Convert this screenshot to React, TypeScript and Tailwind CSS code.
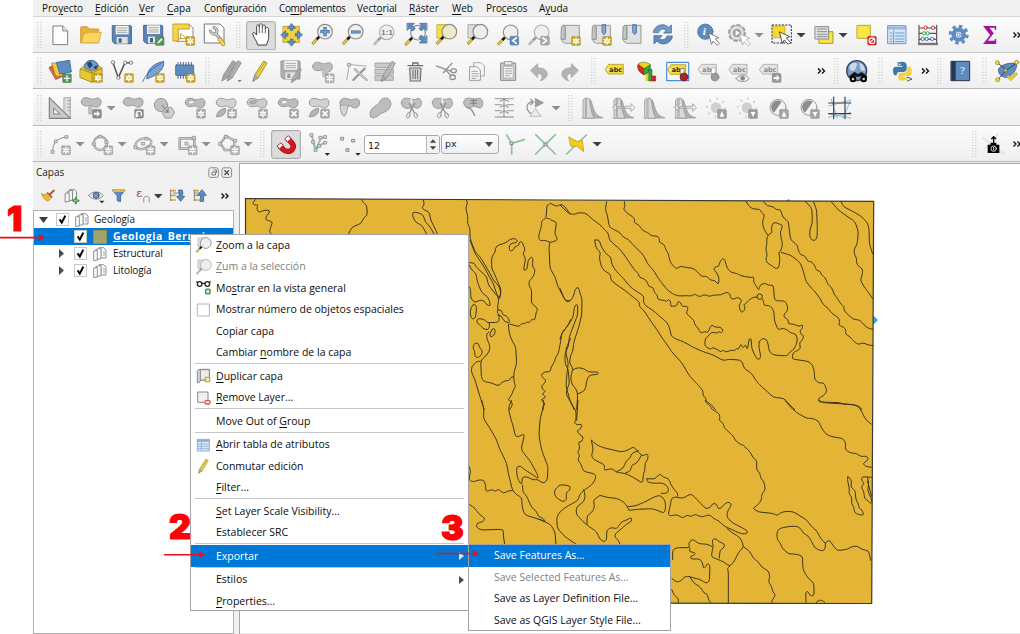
import React from "react";

type P = { children?: React.ReactNode };

/* ---------- basic building blocks ---------- */

// Icons are drawn on a fine grid, three units to a pixel.
function Ic({ x, y, children }: P & { x: number; y: number }) {
  return (
    <svg className="h-[30px] w-[31px] shrink-0" viewBox={`${x} ${y} 93 90`} fill="none" strokeLinejoin="round" strokeLinecap="round">
      {children}
    </svg>
  );
}

function Grip({ className = "w-3" }: { className?: string }) {
  return (
    <div className={`flex h-full shrink-0 items-center justify-center ${className}`}>
      <svg className="h-[26px] w-[5px]" viewBox="0 0 5 26" stroke="#bdbdbd" strokeWidth="1" strokeDasharray="1 1.8">
        <path d="M.8 0V26M3.8 0V26" />
      </svg>
    </div>
  );
}

function Drop({ dark = false }: { dark?: boolean }) {
  return (
    <svg className="h-[30px] w-[11px] shrink-0" viewBox="0 0 11 30">
      <path d="M-.2 13H8.6L4.2 17.6Z" fill={dark ? "#3c3c3c" : "#8e8e8e"} />
    </svg>
  );
}

function More({ className = "w-[14px]" }: { className?: string }) {
  return (
    <svg className={`h-[30px] shrink-0 ${className}`} viewBox="0 0 14 30" fill="none" stroke="#111" strokeWidth="1.4">
      <path d="M3.5 12.5L6 15L3.5 17.5M7.5 12.5L10 15L7.5 17.5" />
    </svg>
  );
}

function Bar({ children, className = "" }: P & { className?: string }) {
  return (
    <div className={`flex shrink-0 items-center overflow-hidden border-b bg-linear-to-b from-[#fbfbfb] to-[#efefef] ${className}`}>{children}</div>
  );
}

function Mn({ t }: { t: string }) {
  const i = t.indexOf("&");
  if (i < 0) return <>{t}</>;
  return (
    <>
      {t.slice(0, i)}
      <span className="underline underline-offset-[1.5px]">{t[i + 1]}</span>
      {t.slice(i + 2)}
    </>
  );
}

/* ---------- icon parts ---------- */

const BLUE = "#5f8cc0";

function Badge({ x, y, k, c = "#a9a9a9" }: { x: number; y: number; k: string; c?: string }) {
  return (
    <g transform={`translate(${x} ${y})`}>
      <rect x="-13.5" y="-13.5" width="27" height="27" rx="4" fill={c} stroke="#00000030" strokeWidth="2" />
      {k === "star" && (
        <>
          <path d="M0-9V9M-8-4.5L8 4.5M-8 4.5L8-4.5" stroke="#fff" strokeWidth="4.5" />
          <circle r="2" fill={c} />
        </>
      )}
      {k === "plus" && <path d="M0-8V8M-8 0H8" stroke="#fff" strokeWidth="4" />}
      {k === "x" && <path d="M-6-6L6 6M-6 6L6-6" stroke="#fff" strokeWidth="5" />}
      {k === "pen" && <path d="M-7 8L-5 2L5-8L9-4L-2 6Z" fill="#fff" />}
      {k === "right" && <path d="M-9-3H0V-9L9 0L0 9V3H-9Z" fill="#fff" />}
      {k === "up" && <path d="M0-9L7 8H-7Z" fill="#fff" />}
      {k === "down" && <path d="M0 9L7-6H-7Z" fill="#fff" />}
      {k === "rot" && <path d="M-4 8A8 8 0 1 1 6 5M-4 8V0M-4 8H-10" stroke="#fff" strokeWidth="3.5" />}
      {k === "lt" && <path d="M6-8L-5 0L6 8" stroke="#fff" strokeWidth="5" />}
      {k === "gt" && <path d="M-6-8L5 0L-6 8" stroke="#fff" strokeWidth="5" />}
    </g>
  );
}

const GOLD = "#c9a61a";

function Glass({ x, y, gray = false, fill = "#eeeeeaee" }: { x: number; y: number; gray?: boolean; fill?: string }) {
  return (
    <g transform={`translate(${x} ${y})`}>
      <path d="M-38 37L-24 22" stroke={gray ? "#a8a8a8" : "#8a7420"} strokeWidth="8" strokeLinecap="butt" />
      <path d="M-37 36L-24 22" stroke={gray ? "#c4c4c4" : "#f7cf2b"} strokeWidth="5" strokeLinecap="butt" />
      <path d="M-25 23L-17 15" stroke={gray ? "#999" : "#111"} strokeWidth="8" strokeLinecap="butt" />
      <circle r="22" fill={fill} stroke={gray ? "#b0b0b0" : "#8d8d8d"} strokeWidth="3.5" />
    </g>
  );
}

function Cursor({ x, y, o = "#444" }: { x: number; y: number; o?: string }) {
  return <path transform={`translate(${x} ${y})`} d="M0 0L30 14L20 18L32 31L26 37L14 24L9 33Z" fill="#fff" stroke={o} strokeWidth="2.5" />;
}

function Floppy({ x, y, gray = false }: { x: number; y: number; gray?: boolean }) {
  return (
    <g transform={`translate(${x} ${y})`}>
      <path d="M0 2H54L56 4V56H6L0 50Z" fill={gray ? "#adadad" : "#5c85b3"} stroke={gray ? "#8d8d8d" : "#44638a"} strokeWidth="3" />
      <path d="M9 2H48V28H9Z" fill="#f4f4f2" />
      <path d="M14 9H43M14 16H43M14 22H43" stroke="#999" strokeWidth="2.5" />
      <path d="M12 36H45V56H12Z" fill="#e2e2e0" />
      <path d="M18 40H27V53H18Z" fill={gray ? "#999" : "#44638a"} />
    </g>
  );
}

function Blob({ x, y, f = "#bdbdbd", hole = false, hf = "#f6f6f6" }: { x: number; y: number; f?: string; hole?: boolean; hf?: string }) {
  return (
    <g transform={`translate(${x} ${y})`}>
      <path d="M1 14C1 4 9 0 18 1C28 3 34 8 42 4C50 0 58 2 60 11C61 21 56 29 47 30C38 31 36 22 27 24C16 28 2 27 1 14Z" fill={f} stroke="#8f8f8f" strokeWidth="2.5" />
      {hole && <path d="M9 14C10 6 22 6 30 10C27 18 12 21 9 14Z" fill={hf} stroke="#8f8f8f" strokeWidth="2" />}
    </g>
  );
}

function Tag({ x, y, c, s, w = 54 }: { x: number; y: number; c: string; s: string; w?: number }) {
  return (
    <g transform={`translate(${x} ${y})`}>
      <path d={`M0 15L10 0H${w}V29H10Z`} fill={c} stroke={s} strokeWidth="2.5" />
      <circle cx="8" cy="15" r="2.5" fill="#fff" />
      <text x="12" y="22" className="font-['DejaVu_Sans'] text-[20px] font-bold" fill={s === "#a8a8a8" ? "#8a8a8a" : "#2b2b2b"} textLength={w - 16} lengthAdjust="spacingAndGlyphs">
        abc
      </text>
    </g>
  );
}

function Node({ x, y, c = "#8f8f8f" }: { x: number; y: number; c?: string }) {
  return <rect x={x - 4} y={y - 4} width="8" height="8" fill="#ddd" stroke={c} strokeWidth="2.5" />;
}

function Pencil({ x, y, c = "#f0d34a", o = "#9a8320" }: { x: number; y: number; c?: string; o?: string }) {
  return (
    <g transform={`translate(${x} ${y})`}>
      <path d="M2 62L7 44L34 2L44 8L18 52Z" fill={c} stroke={o} strokeWidth="2.5" />
      <path d="M12 46L38 6" stroke={o} strokeWidth="1.5" />
      <path d="M2 62L7 45L17 52Z" fill="#a9a9a9" stroke="#888" strokeWidth="1.5" />
    </g>
  );
}

function Scissor({ x }: { x: number }) {
  return (
    <g transform={`translate(${x} 0)`} stroke="#909090" strokeWidth="2.5">
      <path d="M2 50C2 38 14 34 24 38C34 34 38 44 44 40C56 32 64 42 62 54C60 68 46 70 38 62L30 66C16 70 4 66 2 50Z" fill="#bfbfbf" />
      <path d="M32 34V50" stroke="#f4f4f4" strokeWidth="5" />
      <path d="M26 52L42 82M42 52L26 82" strokeWidth="4" />
      <ellipse cx="23" cy="88" rx="5" ry="8" fill="#eee" transform="rotate(20 23 88)" />
      <ellipse cx="45" cy="88" rx="5" ry="8" fill="#eee" transform="rotate(-20 45 88)" />
    </g>
  );
}

function Hist({ x, arrows = false }: { x: number; arrows?: boolean }) {
  return (
    <g transform={`translate(${x} 0)`}>
      <path d="M27 42C35 58 34 90 64 95H27Z" fill="#b0b0b0" stroke="#999" strokeWidth="2.5" />
      <path d="M4 96V42L11 36V96ZM14 96V36L23 38C27 60 27 76 37 96Z" fill="#d9d9d9" stroke="#9b9b9b" strokeWidth="2.5" />
      <path d="M0 96H62" stroke="#aaa" strokeWidth="2" />
      {arrows && <path d="M0 64L11 53V61H24V53M66 64L55 53V61H36V67H55V75ZM0 64L11 75V67H24" fill="#f4f4f4" stroke="#9b9b9b" strokeWidth="2.5" />}
    </g>
  );
}

function Book({ x, y, mark = false }: { x: number; y: number; mark?: boolean }) {
  return (
    <g transform={`translate(${x} ${y})`}>
      <path d="M2 8C2 0 14 0 14 8V44H2Z" fill="#c4c4c4" stroke="#858585" strokeWidth="2.5" />
      <path d="M10 2H56V56H14L4 50V44H14V8Z" fill="#e0e0e0" stroke="#8a8a8a" strokeWidth="2.5" />
      {mark && <path d="M32 0H42V24L37 30L32 24Z" fill="#7fa6d2" stroke="#3f6694" strokeWidth="2.5" />}
    </g>
  );
}

/* ---------- toolbars ---------- */

function FileBar() {
  return (
    <Bar className="h-[37px] border-t border-t-[#d6d6d6] border-b-[#c6c6c6] pt-px">
      <Grip />
      <Ic x={45} y={60}>
        <path d="M70 78H98L113 93V134H70Z" fill="#fdfdfd" stroke="#7d7d7d" strokeWidth="3" />
        <path d="M98 78V93H113" fill="#ddd" stroke="#7d7d7d" strokeWidth="2.5" />
      </Ic>
      <Ic x={138} y={60}>
        <path d="M152 126V84Q152 80 156 80H172L178 87H206V128H152Z" fill="#e8b13a" stroke="#c8932a" strokeWidth="2.5" />
        <path d="M154 128L161 102L178 97H214L206 128Z" fill="#fbd560" stroke="#d7a83a" strokeWidth="2.5" />
      </Ic>
      <Ic x={231} y={60}>
        <Floppy x={248} y={75} />
      </Ic>
      <Ic x={324} y={60}>
        <Floppy x={342} y={74} />
        <Badge x={389} y={123} k="pen" c="#53945d" />
      </Ic>
      <Ic x={417} y={60}>
        <path d="M442 74H479L489 84V124H442Z" fill="#fff" stroke="#777" strokeWidth="2.5" />
        <path d="M430 72H478V87H445V123H430Z" fill="#f5d54a" stroke="#b3912a" strokeWidth="2.5" />
        <path d="M452 100V116M448 116H470M456 104L466 112" stroke="#b99b35" strokeWidth="3" />
        <Badge x={481} y={123} k="star" c={GOLD} />
      </Ic>
      <Ic x={510} y={60}>
        <path d="M524 72H570L582 84V129H524Z" fill="#fdfdfd" stroke="#777" strokeWidth="3" />
        <path d="M541 93C546 104 556 104 560 98C562 92 560 86 552 82M556 100L573 120" stroke="#7d7d7d" strokeWidth="9" />
        <path d="M541 93C546 104 556 104 560 98C562 92 560 86 552 82M556 100L573 120" stroke="#cfcfcf" strokeWidth="5" />
        <path d="M569 118L580 132" stroke="#a5842a" strokeWidth="12" />
        <path d="M569 118L580 132" stroke="#f5d75c" strokeWidth="8" />
      </Ic>
      <Grip className="w-[15px]" />
      <Ic x={648} y={60}>
        <rect x="650" y="65" width="86" height="84" rx="5" fill="#dcdcdc" stroke="#a8a8a8" strokeWidth="3" />
        <path
          d="M683 134C681 122 668 110 668 101C669 96 675 97 680 105V80C680 73 687 73 688 80V76C688 70 696 70 697 76V79C698 73 706 74 706 80V86C708 80 716 82 716 88V112C716 122 711 126 710 134Z"
          fill="#fff"
          stroke="#333"
          strokeWidth="2.8"
        />
        <path d="M688 80V98M697 79V98M706 86V99" stroke="#333" strokeWidth="2.3" />
      </Ic>
      <Ic x={741} y={60}>
        <rect x="760" y="79" width="48" height="48" fill="#f3d23b" stroke="#b1932a" strokeWidth="2.5" />
        <path
          d="M785 71L797 85H789V91H781V85H773ZM785 138L797 124H789V117H781V124H773ZM753 104L767 92V100H774V108H767V116ZM817 104L803 92V100H796V108H803V116Z"
          fill={BLUE}
          stroke="#3d618f"
          strokeWidth="2"
        />
      </Ic>
      <Ic x={834} y={60}>
        <Glass x={885} y={95} />
        <path d="M885 81V109M871 95H899" stroke="#416a9c" strokeWidth="10" strokeLinecap="butt" />
        <path d="M885 83V107M873 95H897" stroke="#6d9bd0" strokeWidth="6" strokeLinecap="butt" />
      </Ic>
      <Ic x={927} y={60}>
        <Glass x={977} y={95} />
        <path d="M963 96H992" stroke="#416a9c" strokeWidth="9" strokeLinecap="butt" />
        <path d="M965 96H990" stroke="#6d9bd0" strokeWidth="5" strokeLinecap="butt" />
      </Ic>
      <Ic x={30} y={60}>
        <Glass x={80} y={97} gray />
        <text x="64" y="105" className="font-['Liberation_Sans'] text-[23px] font-bold" fill="#777" textLength="34">
          1:1
        </text>
      </Ic>
      <Ic x={123} y={60}>
        <Glass x={174} y={98} fill="#f4f4f4" />
        <path
          d="M142 70H163L157 77L166 86L158 93L149 84L142 91ZM200 70H179L185 77L177 86L184 93L193 84L200 91ZM200 129H178L185 121L176 113L184 105L193 114L200 107Z"
          fill={BLUE}
          stroke="#3d618f"
          strokeWidth="2"
        />
      </Ic>
      <Ic x={216} y={60}>
        <rect x="232" y="74" width="36" height="40" fill="#f8e23c" stroke="#b9a32f" strokeWidth="2.5" />
        <Glass x={268} y={95} fill="#efe9c9ee" />
      </Ic>
      <Ic x={309} y={60}>
        <rect x="325" y="74" width="36" height="40" fill="#dcdcdc" stroke="#999" strokeWidth="2.5" />
        <Glass x={361} y={95} />
      </Ic>
      <Ic x={402} y={60}>
        <Glass x={452} y={97} />
        <Badge x={463} y={122} k="lt" c={BLUE} />
      </Ic>
      <Ic x={495} y={60}>
        <Glass x={545} y={97} gray />
        <Badge x={555} y={122} k="gt" />
      </Ic>
      <Ic x={588} y={60}>
        <Book x={602} y={74} />
        <Badge x={648} y={123} k="star" c={GOLD} />
      </Ic>
      <Ic x={681} y={60}>
        <Book x={695} y={74} mark />
        <Badge x={741} y={123} k="star" c={GOLD} />
      </Ic>
      <Ic x={774} y={60}>
        <Book x={787} y={74} mark />
      </Ic>
      <Ic x={867} y={60}>
        <path d="M880 97C882 76 912 66 926 83L934 75V99H911L919 91C908 83 899 88 896 97Z" fill="#6f9bcd" stroke="#41699b" strokeWidth="2.5" />
        <path d="M937 109C935 131 905 140 891 123L882 132V107H906L898 115C907 124 918 118 921 109Z" fill={BLUE} stroke="#41699b" strokeWidth="2.5" />
      </Ic>
      <Grip className="w-[13px]" />
      <Ic x={9} y={60}>
        <circle cx="46" cy="95" r="23" fill={BLUE} stroke="#48719f" strokeWidth="2.5" />
        <text x="38" y="106" className="font-['Liberation_Serif'] text-[34px] font-bold italic" fill="#fff">
          i
        </text>
        <Cursor x={56} y={99} o="#666" />
      </Ic>
      <Ic x={102} y={60}>
        <circle cx="141" cy="99" r="24" stroke="#a2a2a2" strokeWidth="6" strokeDasharray="9 9.85" />
        <circle cx="141" cy="99" r="22" fill="#e2e2e2" stroke="#9c9c9c" strokeWidth="2.5" />
        <circle cx="141" cy="99" r="13" fill="#a2a2a2" />
        <path d="M137 91L150 99L137 107Z" fill="#fff" />
        <Cursor x={149} y={101} o="#aaa" />
      </Ic>
      <Drop />
      <Ic x={228} y={60}>
        <rect x="246" y="75" width="58" height="54" fill="#f2f2f2" stroke="#222" strokeWidth="3" strokeDasharray="6 4" strokeLinecap="butt" />
        <path d="M249 78H285V113H249Z" fill="#f5d92f" stroke="#b9a32f" strokeWidth="2" />
        <Cursor x={269} y={96} o="#333" />
      </Ic>
      <Drop dark />
      <Ic x={354} y={60}>
        <rect x="388" y="95" width="41" height="35" fill="#fbe544" stroke="#a8942c" strokeWidth="3" />
        <path d="M376 80H416V117H376Z" fill="#e3e3e3" stroke="#888" strokeWidth="3" />
        <path d="M382 87H411M382 95H411M382 103H411M382 110H411" stroke="#8d8d8d" strokeWidth="3" />
      </Ic>
      <Drop dark />
      <Ic x={480} y={60}>
        <rect x="502" y="76" width="39" height="39" fill="#fbe544" stroke="#b9a32f" strokeWidth="3" />
        <Badge x={546} y={122} k="" c="#d8272c" />
        <circle cx="546" cy="122" r="8.5" stroke="#fff" strokeWidth="3.5" />
        <path d="M540 128L552 116" stroke="#fff" strokeWidth="3.5" />
      </Ic>
      <Ic x={573} y={60}>
        <rect x="594" y="77" width="54" height="54" fill="#d7e6f5" stroke="#6d9bd0" strokeWidth="3" />
        <path d="M594 84H648" stroke="#6d9bd0" strokeWidth="9" strokeLinecap="butt" opacity=".6" />
        <path d="M611 92V131M600 99H606M600 108H606M600 117H606M600 125H606M617 99H642M617 108H642M617 117H642M617 125H642" stroke="#6d9bd0" strokeWidth="3" />
      </Ic>
      <Ic x={666} y={60}>
        <path d="M687 76V133M740 76V133M687 84H740M687 100H740M687 118H740" stroke="#555" strokeWidth="3.5" />
        <path d="M684 132H744" stroke="#777" strokeWidth="7" strokeLinecap="butt" />
        <g fill="#fff" strokeWidth="3">
          <circle cx="707" cy="83" r="5" stroke="#d03030" />
          <circle cx="729" cy="83" r="5" stroke="#d03030" />
          <circle cx="702" cy="100" r="5" stroke="#3aa655" />
          <circle cx="713" cy="100" r="5" stroke="#3aa655" />
          <circle cx="698" cy="117" r="5" stroke="#3f77b5" />
          <circle cx="710" cy="117" r="5" stroke="#3f77b5" />
          <circle cx="727" cy="117" r="5" stroke="#3f77b5" />
        </g>
      </Ic>
      <Ic x={759} y={60}>
        <circle cx="806" cy="104" r="25" stroke={BLUE} strokeWidth="10" strokeDasharray="10 9.63" strokeLinecap="butt" />
        <circle cx="806" cy="104" r="15" fill="#e8eff7" stroke={BLUE} strokeWidth="13" />
        <circle cx="806" cy="104" r="5" stroke={BLUE} strokeWidth="3" fill="#fff" />
      </Ic>
      <Ic x={852} y={60}>
        <text x="877" y="131" className="font-['DejaVu_Serif'] text-[74px] font-bold" fill="#a2109f" textLength="46" lengthAdjust="spacingAndGlyphs">
          Σ
        </text>
      </Ic>
      <More className="ml-[5px] w-[14px]" />
    </Bar>
  );
}

function EditBar() {
  return (
    <Bar className="h-[36px] border-b-[#b9b9b9] pt-px">
      <Grip />
      <Ic x={45} y={168}>
        <path d="M58 203L76 190L100 228L78 238Z" fill="#d9663a" stroke="#9c4a28" strokeWidth="2.5" />
        <path d="M66 189H104V228H78Z" fill="#f2cc3d" stroke="#a98b26" strokeWidth="2.5" />
        <path d="M80 187L119 181L124 216L90 222Z" fill={BLUE} stroke="#3d618f" strokeWidth="2.5" />
        <Badge x={111} y={235} k="plus" c="#53945d" />
      </Ic>
      <Ic x={138} y={168}>
        <circle cx="184" cy="203" r="22" fill="#6f9bcd" stroke="#324f78" strokeWidth="2.5" />
        <path d="M170 190L182 184L188 196L178 206ZM190 200L204 196L198 212Z" fill="#27456e" />
        <path d="M151 207L164 197V206L185 214L204 206V196L216 205V230L186 247L151 233Z" fill="#ecc930" stroke="#96801f" strokeWidth="2.5" />
        <path d="M151 207L186 219L216 205M186 219V246" stroke="#96801f" strokeWidth="2.5" />
        <Badge x={204} y={234} k="star" c={GOLD} />
      </Ic>
      <Ic x={231} y={168}>
        <path d="M249 188L265 233L285 188H303" stroke="#555" strokeWidth="4.5" />
        <g fill="#fff" stroke="#666" strokeWidth="2.5">
          <circle cx="249" cy="187" r="5" />
          <circle cx="286" cy="188" r="5" />
          <circle cx="303" cy="188" r="5" />
          <circle cx="265" cy="233" r="5" />
        </g>
        <Badge x={297} y={234} k="star" c={GOLD} />
      </Ic>
      <Ic x={324} y={168}>
        <path d="M351 236C349 210 370 190 401 184C404 205 386 226 351 236Z" fill="#79a4d6" stroke="#3d618f" strokeWidth="2.5" />
        <path d="M338 245C348 222 366 204 394 190" stroke="#3d618f" strokeWidth="2.5" />
        <Badge x={390} y={234} k="star" c={GOLD} />
      </Ic>
      <Ic x={417} y={168}>
        <path d="M444 186V236M452 186V236M460 186V236M468 186V236M476 186V236M484 186V222" stroke="#4a6388" strokeWidth="3" strokeLinecap="butt" />
        <rect x="437" y="195" width="54" height="31" rx="2" fill={BLUE} stroke="#3d618f" strokeWidth="2.5" />
        <Badge x={482} y={234} k="star" c={GOLD} />
      </Ic>
      <Grip className="w-[15px]" />
      <Ic x={555} y={168}>
        <Pencil x={574} y={180} c="#ababab" o="#8a8a8a" />
        <Pencil x={590} y={180} c="#b5b5b5" o="#8a8a8a" />
        <path d="M622 240H636L629 247Z" fill="#888" />
      </Ic>
      <Ic x={648} y={168}>
        <Pencil x={667} y={181} />
      </Ic>
      <Ic x={741} y={168}>
        <Floppy x={754} y={181} gray />
        <g transform="translate(783 202) scale(.72)">
          <Pencil x={0} y={0} c="#b5b5b5" o="#808080" />
        </g>
      </Ic>
      <Ic x={834} y={168}>
        <Blob x={847} y={186} />
        <path d="M874 213L896 208L892 232H878Z" fill="#c4c4c4" />
        <Badge x={899} y={235} k="star" c="#b5b5b5" />
      </Ic>
      <Ic x={927} y={168}>
        <path d="M958 195L950 240M958 194L1008 198" stroke="#aaa" strokeWidth="3" />
        <Node x={958} y={194} />
        <path d="M975 208L1010 240M1004 206L970 240" stroke="#9a9a9a" strokeWidth="7" />
        <path d="M975 208L1010 240" stroke="#e6e6e6" strokeWidth="3" />
      </Ic>
      <Ic x={30} y={168}>
        <path d="M46 189H100V203H46ZM46 208H100V222H46ZM46 227H100V241H46Z" fill="#cacaca" stroke="#999" strokeWidth="2.5" />
        <Pencil x={62} y={182} c="#c2c2c2" o="#888" />
      </Ic>
      <Ic x={123} y={168}>
        <path d="M149 204H183L181 243H151Z" fill="#d8d8d8" stroke="#6d6d6d" strokeWidth="3.5" />
        <path d="M144 197H188M158 196V189H174V196" stroke="#6d6d6d" strokeWidth="4" />
        <path d="M159 210V236M166 210V236M173 210V236" stroke="#6d6d6d" strokeWidth="3" />
      </Ic>
      <Ic x={216} y={168}>
        <path d="M230 198L274 214M276 190L250 218" stroke="#9a9a9a" strokeWidth="4.5" />
        <ellipse cx="281" cy="212" rx="8" ry="6" stroke="#8f8f8f" strokeWidth="4" />
        <ellipse cx="278" cy="232" rx="8" ry="7" stroke="#8f8f8f" strokeWidth="4" />
        <path d="M256 209L272 226" stroke="#8f8f8f" strokeWidth="4" />
      </Ic>
      <Ic x={309} y={168}>
        <path d="M342 188H364L373 197V228H342Z" fill="#f6f6f6" stroke="#999" strokeWidth="2.5" />
        <path d="M330 200H350L361 210V241H330Z" fill="#f6f6f6" stroke="#888" strokeWidth="2.5" />
        <path d="M336 214H352M336 221H355M336 228H355M336 235H348" stroke="#999" strokeWidth="2.5" />
      </Ic>
      <Ic x={402} y={168}>
        <path d="M423 189H467V241H423Z" fill="#cfcfcf" stroke="#8a8a8a" strokeWidth="3" />
        <path d="M431 199H460V234H431Z" fill="#f4f4f4" stroke="#999" strokeWidth="2" />
        <path d="M434 185H456V195H434Z" fill="#eee" stroke="#888" strokeWidth="2.5" />
        <path d="M436 206H455M436 213H455M436 220H455M436 227H448" stroke="#999" strokeWidth="2.5" />
      </Ic>
      <Ic x={495} y={168}>
        <path d="M512 211L533 191V204C553 202 564 214 561 226C558 235 550 240 541 242C550 233 548 222 533 220V232Z" fill="#b4b4b4" stroke="#999" strokeWidth="2" />
      </Ic>
      <Ic x={588} y={168}>
        <path d="M655 211L634 191V204C614 202 603 214 606 226C609 235 617 240 626 242C617 233 619 222 634 220V232Z" fill="#b4b4b4" stroke="#999" strokeWidth="2" />
      </Ic>
      <Grip className="w-[13px]" />
      <Ic x={720} y={168}>
        <Tag x={736} y={193} c="#f5dc3d" s="#b39a25" />
      </Ic>
      <Ic x={813} y={168}>
        <path d="M852 206L834 193C838 184 862 184 871 194Z" fill="#f0d31e" stroke="#555" strokeWidth="1.5" />
        <path d="M852 206L834 193C830 206 838 220 852 224Z" fill="#d82a22" stroke="#7a1a15" strokeWidth="1.5" />
        <path d="M852 206L871 194C874 210 866 222 852 224Z" fill="#37a03f" stroke="#1d6525" strokeWidth="1.5" />
        <path d="M857 222H866V243H857Z" fill="#e9cf20" />
        <path d="M867 208H876V243H867Z" fill="#2fa33a" stroke="#145a1c" strokeWidth="1.5" />
        <path d="M877 228H887V243H877Z" fill="#d01f1f" stroke="#7a1a15" strokeWidth="1.5" />
      </Ic>
      <Ic x={906} y={168}>
        <rect x="920" y="187" width="66" height="55" fill="#f6f6f6" stroke="#4a90d9" strokeWidth="3.5" />
        <Tag x={923} y={194} c="#f5dc3d" s="#b39a25" />
        <path d="M962 206H972V224H962Z" fill="#fff" stroke="#777" strokeWidth="2" />
        <circle cx="972" cy="231" r="12" fill="#a8262b" stroke="#6e1417" strokeWidth="2" />
      </Ic>
      <Ic x={9} y={168}>
        <Tag x={25} y={193} c="#e2e2e2" s="#a8a8a8" />
        <path d="M66 204H76V224H66Z" fill="#fff" stroke="#aaa" strokeWidth="2" />
        <circle cx="75" cy="231" r="12" fill="#9b9b9b" stroke="#888" strokeWidth="2" />
      </Ic>
      <Ic x={102} y={168}>
        <Tag x={117} y={193} c="#e2e2e2" s="#a8a8a8" />
        <path d="M138 236C148 222 168 222 178 236C168 248 148 248 138 236Z" fill="#f4f4f4" stroke="#888" strokeWidth="2.5" />
        <circle cx="158" cy="235" r="7" fill="#888" />
      </Ic>
      <Ic x={195} y={168}>
        <Tag x={209} y={193} c="#e2e2e2" s="#a8a8a8" />
        <Badge x={260} y={234} k="right" c="#9a9a9a" />
      </Ic>
      <More className="ml-[27px] w-[17px]" />
      <Grip />
      <Ic x={456} y={168}>
        <circle cx="500" cy="212" r="30" fill="#7d9cc4" stroke="#34455f" strokeWidth="4" />
        <path d="M478 200C484 186 498 186 502 194C496 200 500 206 492 212L482 212ZM508 188C520 192 526 204 524 214L512 210Z" fill="#c9d8ea" />
        <path d="M483 230L494 221L500 226H508L514 221L527 230" stroke="#111" strokeWidth="9" />
        <circle cx="489" cy="237" r="7" fill="#ccc" stroke="#000" strokeWidth="6" />
        <circle cx="521" cy="237" r="7" fill="#ccc" stroke="#000" strokeWidth="6" />
      </Ic>
      <Grip className="w-[15px]" />
      <Ic x={594} y={168}>
        <path d="M623 187C640 182 650 187 650 195V208C650 214 645 216 640 216H628C622 216 620 220 620 226H613C607 214 608 200 617 200H637V197H623Z" fill="#3f77a8" />
        <circle cx="629" cy="193" r="2.5" fill="#fff" />
        <path d="M652 200H660C668 208 667 226 658 228H640V231H654V238C644 244 626 243 625 235V224C625 219 629 218 634 218H645C651 217 652 212 652 206Z" fill="#f7cf45" />
        <path d="M652 231L666 237L652 243" stroke="#555" strokeWidth="3" />
      </Ic>
      <More className="ml-[-1px] w-[15px]" />
      <Grip className="w-[13px]" />
      <Ic x={768} y={168}>
        <rect x="784" y="184" width="55" height="58" fill={BLUE} stroke="#27364d" strokeWidth="3" />
        <rect x="784" y="184" width="13" height="58" fill="#27364d" />
        <text x="810" y="223" className="font-['Liberation_Serif'] text-[32px]" fill="#fff">
          ?
        </text>
      </Ic>
      <Grip className="w-[14px]" />
      <Ic x={903} y={168}>
        <path d="M926 207C935 190 965 188 980 190C982 210 965 230 950 232C935 233 922 220 926 207Z" fill={BLUE} stroke="#3d618f" strokeWidth="2.5" />
        <path d="M922 188L950 210L978 190M950 210L923 239" stroke="#444" strokeWidth="3" />
        <path d="M954 229L962 238L978 222" stroke="#a88a1f" strokeWidth="8" />
        <path d="M954 229L962 238L978 222" stroke="#f2d52e" strokeWidth="5" />
        <g fill="#f5dc3d" stroke="#8c7a20" strokeWidth="2">
          <circle cx="922" cy="188" r="6" />
          <circle cx="980" cy="187" r="6" />
          <circle cx="923" cy="239" r="6" />
          <circle cx="947" cy="211" r="4" />
        </g>
      </Ic>
    </Bar>
  );
}

function DigitizeBar() {
  return (
    <Bar className="h-[37px] border-b-[#bcbcbc] pt-[2px]">
      <Grip />
      <Ic x={45} y={21}>
        <path d="M103 35H121V97H103Z" fill="#ddd" stroke="#999" strokeWidth="2.5" />
        <path d="M112 44H120M114 54H120M112 64H120M114 74H120" stroke="#999" strokeWidth="2.5" />
        <path d="M58 35V97H121Z" fill="#cacaca" stroke="#808080" strokeWidth="3.5" />
        <path d="M71 67V84H89Z" fill="#f4f4f4" stroke="#808080" strokeWidth="3" />
      </Ic>
      <Ic x={138} y={21}>
        <Blob x={153} y={34} />
        <path d="M176 60V84H186V60" fill="#c4c4c4" stroke="#a0a0a0" strokeWidth="2" />
        <Badge x={201} y={83} k="right" c="#8e8e8e" />
      </Ic>
      <Drop />
      <Ic x={264} y={21}>
        <Blob x={279} y={34} />
        <Badge x={327} y={83} k="rot" c="#8e8e8e" />
      </Ic>
      <Ic x={357} y={21}>
        <circle cx="393" cy="57" r="20" fill="#c0c0c0" stroke="#8f8f8f" strokeWidth="2.5" />
        <path d="M397 79L406 64H424L434 79L424 96H406Z" fill="#d0d0d0" stroke="#8f8f8f" strokeWidth="2.5" />
        <path d="M396 58L414 78M414 78V68M414 78H404" stroke="#666" strokeWidth="2.5" />
      </Ic>
      <Ic x={450} y={21}>
        <Blob x={465} y={36} hole />
        <Badge x={513} y={83} k="star" />
      </Ic>
      <Ic x={543} y={21}>
        <Blob x={558} y={36} f="#d2d2d2" />
        <path d="M560 92C560 76 572 70 586 66C590 80 580 94 560 92Z" fill="#b5b5b5" stroke="#8f8f8f" strokeWidth="2.5" />
        <Badge x={606} y={83} k="star" />
      </Ic>
      <Ic x={636} y={21}>
        <Blob x={651} y={36} f="#cccccc" hole hf="#b2b2b2" />
        <Badge x={699} y={83} k="star" />
      </Ic>
      <Ic x={729} y={21}>
        <Blob x={744} y={36} hole />
        <Badge x={792} y={83} k="x" />
      </Ic>
      <Ic x={822} y={21}>
        <Blob x={837} y={36} f="#d2d2d2" />
        <path d="M839 92C839 76 851 70 865 66C869 80 859 94 839 92Z" fill="#b5b5b5" stroke="#8f8f8f" strokeWidth="2.5" />
        <Badge x={885} y={83} k="x" />
      </Ic>
      <Ic x={915} y={21}>
        <Blob x={929} y={36} />
        <path d="M930 58C932 78 936 92 944 90C952 84 950 66 956 58" fill="#d5d5d5" stroke="#8f8f8f" strokeWidth="2.5" />
        <path d="M932 58H956" stroke="#8f8f8f" strokeWidth="2" strokeDasharray="3 4" />
      </Ic>
      <Ic x={18} y={21}>
        <path d="M32 92C26 78 36 64 50 58C60 52 60 36 76 36C92 36 96 52 90 64C82 80 66 78 56 88C48 96 38 98 32 92Z" fill="#bdbdbd" stroke="#8f8f8f" strokeWidth="2.5" />
      </Ic>
      <Ic x={111} y={21}>
        <Scissor x={122} />
      </Ic>
      <Ic x={204} y={21}>
        <Scissor x={215} />
      </Ic>
      <Ic x={297} y={21}>
        <path d="M311 50C311 36 326 34 336 38C346 42 352 34 362 38C372 46 370 66 358 66C346 60 340 60 330 66C320 66 312 62 311 50Z" fill="#bdbdbd" stroke="#8f8f8f" strokeWidth="2.5" />
        <path d="M332 44H350M332 52H350M340 40V58" stroke="#777" strokeWidth="2.5" />
        <path d="M320 64C334 66 338 76 344 88" stroke="#8f8f8f" strokeWidth="4" />
      </Ic>
      <Ic x={390} y={21}>
        <path d="M406 38H460M406 56H424M440 56H460M406 74H424M440 74H460M406 93H460" stroke="#aaa" strokeWidth="4" />
        <path d="M420 46L432 40L446 46M420 64L432 57L446 64M420 82L432 75L446 82M432 40V92" stroke="#888" strokeWidth="3" />
      </Ic>
      <Ic x={483} y={21}>
        <path d="M527 38L550 50L527 62Z" fill="#9c9c9c" stroke="#888" strokeWidth="2.5" />
        <path d="M527 68L543 91H511Z" fill="#ececec" stroke="#b5b5b5" strokeWidth="2.5" />
        <path d="M512 82C494 70 500 48 518 48M512 40L520 48L512 56" stroke="#999" strokeWidth="4" />
      </Ic>
      <Drop />
      <Grip className="w-[14px]" />
      <Ic x={651} y={21}>
        <Hist x={665} />
      </Ic>
      <Ic x={744} y={21}>
        <Hist x={758} arrows />
      </Ic>
      <Ic x={837} y={21}>
        <Hist x={850} />
      </Ic>
      <Ic x={930} y={21}>
        <Hist x={943} arrows />
      </Ic>
      {[33, 126].map((x, i) => (
        <Ic key={x} x={x} y={21}>
          <circle cx={x + 45} cy="65" r="16" fill="#cfcfcf" />
          <circle cx={x + 45} cy="65" r="27" stroke="#c6c6c6" strokeWidth="7" strokeDasharray="4 17.2" strokeLinecap="butt" />
          <Badge x={x + 63} y={84} k={i ? "down" : "up"} c="#9d9d9d" />
        </Ic>
      ))}
      {[219, 312].map((x, i) => (
        <Ic key={x} x={x} y={21}>
          <circle cx={x + 45} cy="64" r="24" fill="#f2f2f2" stroke="#9d9d9d" strokeWidth="3" />
          <path d={`M${x + 56} 47A20 20 0 1 0 ${x + 33} 80Z`} fill="#8d8d8d" />
          <Badge x={x + 63} y={84} k={i ? "down" : "up"} c="#a5a5a5" />
        </Ic>
      ))}
      <Ic x={405} y={21}>
        <path d="M416 60L482 42M418 84L482 96M424 40L442 97M482 44L458 97M416 94L482 80" stroke="#8fb9d6" strokeWidth="3" />
        <path d="M431 33V98M465 33V98M416 51H482M416 83H482" stroke="#3f4448" strokeWidth="3.5" />
      </Ic>
    </Bar>
  );
}

function SnapBar() {
  return (
    <Bar className="h-[36px] border-b-[#b9b9b9] pt-px">
      <Grip />
      <Ic x={45} y={129}>
        <path d="M68 198C68 172 78 156 110 153" stroke="#999" strokeWidth="3.5" />
        <Node x={68} y={198} />
        <Node x={78} y={166} />
        <Node x={110} y={153} />
        <Badge x={108} y={193} k="star" c="#b2b2b2" />
      </Ic>
      <Drop />
      <Ic x={171} y={129}>
        <circle cx="211" cy="172" r="20" stroke="#999" strokeWidth="7" />
        <circle cx="211" cy="172" r="20" stroke="#d0d0d0" strokeWidth="3" />
        <Node x={211} y={152} />
        <Node x={192} y={174} />
        <Node x={230} y={168} />
        <Badge x={235} y={193} k="star" c="#b2b2b2" />
      </Ic>
      <Drop />
      <Ic x={297} y={129}>
        <ellipse cx="340" cy="173" rx="25" ry="15" stroke="#999" strokeWidth="7" transform="rotate(-20 340 173)" />
        <ellipse cx="340" cy="173" rx="25" ry="15" stroke="#d0d0d0" strokeWidth="3" transform="rotate(-20 340 173)" />
        <Node x={340} y={173} />
        <Node x={350} y={158} />
        <Node x={317} y={184} />
        <Badge x={362} y={193} k="star" c="#b2b2b2" />
      </Ic>
      <Drop />
      <Ic x={423} y={129}>
        <rect x="449" y="157" width="44" height="31" stroke="#999" strokeWidth="8" />
        <rect x="449" y="157" width="44" height="31" stroke="#d0d0d0" strokeWidth="3" />
        <Node x={492} y={155} />
        <Node x={470} y={173} />
        <Badge x={488} y={193} k="star" c="#b2b2b2" />
      </Ic>
      <Drop />
      <Ic x={549} y={129}>
        <path d="M588 150L614 164L610 192H584L571 172Z" stroke="#999" strokeWidth="7" />
        <path d="M588 150L614 164L610 192H584L571 172Z" stroke="#d0d0d0" strokeWidth="3" />
        <Node x={588} y={152} />
        <Node x={616} y={164} />
        <Node x={571} y={174} />
        <Badge x={615} y={193} k="star" c="#b2b2b2" />
      </Ic>
      <Drop />
      <Grip className="w-[15px]" />
      <Ic x={720} y={129}>
        <rect x="725" y="134" width="86" height="83" rx="5" fill="#dcdcdc" stroke="#a0a0a0" strokeWidth="3" />
        <path d="M749 179L760 191C767 198 781 198 787 190C793 181 789 174 784 169L773 157" stroke="#8f1013" strokeWidth="16" strokeLinecap="butt" />
        <path d="M749 179L760 191C767 198 781 198 787 190C793 181 789 174 784 169L773 157" stroke="#d8171c" strokeWidth="12" strokeLinecap="butt" />
        <path d="M742 179L753 171L760 178L749 188ZM765 158L775 149L783 158L773 167Z" fill="#fff" stroke="#b01013" strokeWidth="2.5" />
      </Ic>
      <Ic x={813} y={129}>
        <path d="M845 148L857 192L872 158L886 153M857 192L868 178L886 170M848 166L857 192" stroke="#8bc29a" strokeWidth="5.5" />
        {[[845, 147], [872, 155], [886, 153], [850, 168], [886, 170], [857, 192], [868, 180]].map(([a, b]) => (
          <Node key={a + "-" + b} x={a} y={b} c="#8a8a8a" />
        ))}
        <path d="M884 201H900L892 209Z" fill="#222" />
      </Ic>
      <Ic x={906} y={129}>
        <Node x={937} y={158} c="#777" />
        <Node x={970} y={164} c="#777" />
        <Node x={953} y={192} c="#777" />
        <path d="M976 201H992L984 209Z" fill="#222" />
      </Ic>
      <div className="ml-px flex h-[19px] w-[76px] shrink-0 rounded-[3px] border border-[#a9a9a9] bg-white">
        <span className="flex-1 pt-px pl-[3px] font-['DejaVu_Sans',sans-serif] text-[9.5px] leading-[17px] text-[#222]">12</span>
        <svg className="h-[17px] w-[13px] rounded-r-[2px] border-l border-[#b5b5b5] bg-[#f3f3f3]" viewBox="0 0 13 17">
          <path d="M3 6.7H10L6.5 2.8ZM3 10.3H10L6.5 14.2Z" fill="#484848" />
        </svg>
      </div>
      <div className="ml-px flex h-[20px] w-[58px] shrink-0 items-center justify-between rounded-[3px] border border-[#a9a9a9] bg-linear-to-b from-white to-[#f0f0f0] pr-[5px] pl-[3px]">
        <span className="pt-px font-['DejaVu_Sans',sans-serif] text-[9.5px] text-[#222]">px</span>
        <svg className="h-[5px] w-[8px]" viewBox="0 0 8 5">
          <path d="M0 0H8L4 5Z" fill="#484848" />
        </svg>
      </div>
      <div className="w-px shrink-0" />
      <Ic x={420} y={129}>
        <path d="M440 147L455 172L493 161M455 172V204" stroke="#8bc29a" strokeWidth="5" />
        <Node x={455} y={172} c="#777" />
      </Ic>
      <Ic x={513} y={129}>
        <path d="M527 146L586 204M586 146L527 204" stroke="#8bc29a" strokeWidth="5" />
        <Node x={557} y={175} c="#777" />
      </Ic>
      <Ic x={606} y={129}>
        <path d="M679 147L620 204" stroke="#8bc29a" strokeWidth="5" />
        <path d="M627 153L650 166L667 164L671 197L650 180L634 181Z" fill="#f5cf16" stroke="#c39a12" strokeWidth="2.5" />
      </Ic>
      <Drop dark />
      <div className="flex-1" />
      <Grip className="w-[7px]" />
      <Ic x={866} y={129}>
        <path d="M880 155L945 205M925 145L885 190" stroke="#e6e6e6" strokeWidth="6" />
        <path d="M895 176H930V201H895ZM904 170H921V178H904Z" fill="#000" />
        <path d="M913 170V153M907 158L913 152L919 158" stroke="#000" strokeWidth="4" />
        <circle cx="913" cy="188" r="8" fill="#000" stroke="#fff" strokeWidth="2.5" />
        <path d="M913 184V192" stroke="#fff" strokeWidth="2.5" />
      </Ic>
      <More className="ml-px mr-[-4px] w-[14px]" />
    </Bar>
  );
}

/* ---------- layers panel ---------- */

function PIc({ x, w, children }: P & { x: number; w: string }) {
  return (
    <svg className={`h-[20px] shrink-0 ${w}`} viewBox={`${x} 76 66 60`} fill="none" strokeLinejoin="round" strokeLinecap="round">
      {children}
    </svg>
  );
}

function GroupIcon() {
  return (
    <svg className="h-[14px] w-[14px] shrink-0" viewBox="0 0 42 42" fill="#fbfbfb" stroke="#7c7c7c" strokeWidth="2.5">
      <path d="M18 2H32L39 9V33H18Z" />
      <path d="M24 8V27M33 12V27" strokeWidth="2" />
      <path d="M9 7L24 4V35L9 38Z" />
      <path d="M2 12L13 10V39L2 41Z" />
    </svg>
  );
}

function Check() {
  return (
    <svg className="h-[13px] w-[13px] shrink-0 border border-[#c8c8c8] bg-white" viewBox="0 0 11 11" fill="none" stroke="#000" strokeWidth="2">
      <path d="M2.6 5.4L4.8 8.6L8.3 1.6" />
    </svg>
  );
}

function LayersPanel() {
  return (
    <div className="flex w-[206px] shrink-0 flex-col bg-[#f0f0f0]">
      <div className="flex h-[19px] shrink-0 items-center pl-[3px]">
        <span className="w-[172px] text-[10px] text-[#1c1c1c]">Capas</span>
        <svg className="h-[11px] w-[25px]" viewBox="0 0 25 11" fill="none" stroke="#8a8a8a">
          <rect x=".8" y=".8" width="9.6" height="9.6" rx="2" />
          <path d="M4 5H7.5V8H4ZM5.5 3H8.5V6" stroke="#777" />
          <rect x="14" y=".8" width="9.6" height="9.6" rx="2" />
          <path d="M16.5 3.2L21 8M21 3.2L16.5 8" stroke="#555" strokeWidth="1.4" />
        </svg>
      </div>
      <div className="flex h-[28px] shrink-0 items-center pb-px pl-1">
        <PIc x={111} w="w-[22px]">
          <path d="M149 102L161 90" stroke="#8c6239" strokeWidth="6" />
          <path d="M125 100C134 104 140 100 144 97L156 109C150 114 150 120 142 121C134 118 128 110 125 100Z" fill="#efb73c" stroke="#b27d22" strokeWidth="2" />
          <path d="M143 97L155 109" stroke="#d04a30" strokeWidth="5" />
        </PIc>
        <PIc x={182} w="w-[25px]">
          <g fill="#f4f4f4" stroke="#777" strokeWidth="2.5">
            <path d="M210 87H224L230 93V118H210Z" />
            <path d="M204 92L218 89V118L204 121Z" />
            <path d="M197 98L208 96V122L197 124Z" />
          </g>
          <path d="M228 113V127M221 120H235" stroke="#2f7d3e" strokeWidth="7" />
          <path d="M228 115V125M223 120H233" stroke="#8fcf9a" strokeWidth="3" />
        </PIc>
        <PIc x={252} w="w-[23px]">
          <path d="M265 105C275 90 298 90 308 105C297 119 276 119 265 105Z" fill="#eee" stroke="#8a8a8a" strokeWidth="3" />
          <circle cx="287" cy="104" r="9" fill="#6d9bd0" stroke="#444" strokeWidth="2.5" />
          <path d="M296 120H312L304 128Z" fill="#333" />
        </PIc>
        <PIc x={322} w="w-[23px]">
          <path d="M337 88H375L361 106V123L351 120V106Z" fill={BLUE} stroke="#3d618f" strokeWidth="2.5" />
          <path d="M337 88H375L371 94H341Z" fill="#e9b84a" />
        </PIc>
        <PIc x={391} w="w-[24px]">
          <text x="407" y="109" className="font-['DejaVu_Serif'] text-[34px] leading-none" fill="#8e2a6d">
            ε
          </text>
          <path d="M429 124V113C431 105 444 105 446 113V124" stroke="#aaa" strokeWidth="4" />
        </PIc>
        <svg className="h-[20px] w-[10px] shrink-0" viewBox="0 0 10 20">
          <path d="M0 8H8.5L4.2 12.6Z" fill="#3c3c3c" />
        </svg>
        <PIc x={498} w="w-[26px]">
          <path d="M512 90H526M512 104H526M512 118H526" stroke="#d9a43c" strokeWidth="5" />
          <path d="M512 88V120M520 97H550" stroke="#777" strokeWidth="2.5" />
          <path d="M537 88H547V107H554L542 122L530 107H537Z" fill={BLUE} stroke="#3d618f" strokeWidth="2.5" />
        </PIc>
        <PIc x={570} w="w-[22px]">
          <path d="M583 90H595M583 104H595M583 118H597" stroke="#d9a43c" strokeWidth="5" />
          <path d="M583 88V120M583 97H600" stroke="#777" strokeWidth="2.5" />
          <path d="M601 122H611V104H619L606 87L593 104H601Z" fill={BLUE} stroke="#3d618f" strokeWidth="2.5" />
        </PIc>
        <More className="ml-[6px] w-[14px]" />
      </div>
      <div className="w-[201px] flex-1 border border-[#b0b0b0] bg-white text-[10px] text-[#111]">
        <div className="flex h-[17px] items-center">
          <svg className="mr-[8px] ml-[5px] h-[6px] w-[9px]" viewBox="0 0 9 6">
            <path d="M0 0H9L4.5 6Z" fill="#3c3c3c" />
          </svg>
          <Check />
          <span className="ml-[6px] flex">
            <GroupIcon />
          </span>
          <span className="ml-[5px]">Geología</span>
        </div>
        <div className="flex h-[17px] items-center bg-[#0078d7] pl-[40px] text-white">
          <Check />
          <span className="ml-[6px] h-[14px] w-[14px] shrink-0 border border-[#8b8f58] bg-[#a3a566]" />
          <span className="ml-[6px] text-[10.5px] font-bold tracking-[0.55px] whitespace-nowrap underline">Geologia_Bernejo</span>
        </div>
        {["Estructural", "Litología"].map((t) => (
          <div key={t} className="flex h-[17px] items-center">
            <svg className="mr-[10px] ml-[25px] h-[9px] w-[5px]" viewBox="0 0 5 9">
              <path d="M0 0L5 4.5L0 9Z" fill="#4c4c4c" />
            </svg>
            <Check />
            <span className="ml-[6px] flex">
              <GroupIcon />
            </span>
            <span className="ml-[6px] tracking-[-0.1px]">{t}</span>
          </div>
        ))}
      </div>
    </div>
  );
}

/* ---------- map ---------- */

// Turns a point list into a path whose corners are slightly rounded.
function soft(s: string) {
  const p = s.trim().split(" ").map((q) => q.split(",").map(Number));
  let d = `M${p[0][0]} ${p[0][1]}`;
  for (let i = 1; i < p.length - 1; i++) {
    const [x, y] = p[i];
    const cut = (q: number[]) => {
      const len = Math.hypot(q[0] - x, q[1] - y) || 1;
      const r = Math.min(9, len * 0.42) / len;
      return `${(x + (q[0] - x) * r).toFixed(1)} ${(y + (q[1] - y) * r).toFixed(1)}`;
    };
    d += `L${cut(p[i - 1])}Q${x} ${y} ${cut(p[i + 1])}`;
  }
  const l = p[p.length - 1];
  return d + `L${l[0]} ${l[1]}`;
}

const west = [
  "47,28 38,38 42,45 55,45 50,54 54,65 60,66 75,60 90,62 85,72 77,82 78,90 97,95 95,105 92,112 88,125 94,132",
  "365,28 370,38 380,45 382,75 370,85 364,100 335,112 326,132",
  "550,28 553,45 546,52 552,60 568,66 572,90 585,115 592,132",
  "560,132 545,105 528,98 518,80 518,66 535,68 550,75 555,95 570,110 582,132",
  "678,28 683,38 677,55 684,80 682,100 690,115 690,140 692,150 705,185 720,200 750,250 760,270 778,290 783,312 778,325",
  "690,150 705,190 735,235 745,255 760,280 770,312 778,325",
  "688,218 703,219 706,228 718,240 740,260 745,285 765,310 777,325 772,355 778,362",
  "688,225 695,240 708,250 712,275 718,290 725,308 745,322 752,348 740,345 732,332 720,330 705,338 692,325 692,300 688,290",
  "700,343 710,347 707,383 698,388 692,380 690,360 700,343",
  "718,386 710,390 712,400 722,406 728,415 745,421 750,400 740,396 732,388 718,386",
  "745,398 775,397 777,388 778,375 772,368 772,358 785,362 788,374 800,378 808,390 808,400 790,392 785,378 772,375",
  "778,325 784,300 775,280 765,255 755,235 755,200 765,188 768,168 798,158 810,148 825,145 832,152 830,158 812,160 807,172 810,184 820,180 824,170 838,166 836,158 845,154 850,165 856,180 848,190 857,205 850,242 862,238 864,210 875,200 879,208 877,230 886,240 880,260 866,275 868,290 875,300 874,340 888,350 893,360 888,368 885,390 875,388 868,398 860,396 852,402 845,400 838,410 808,402",
  "748,425 739,432 742,450 748,462 750,480 740,495 722,512 724,560 730,574 745,577 758,580 775,588 785,578 795,572 808,572 812,562 822,560",
  "805,402 808,430 815,450 827,470 830,520 821,550 822,575 827,590 820,600 815,615 803,630 818,638 815,650 808,660",
  "722,514 710,514 695,530 694,545 705,570 720,620 733,660",
  "705,460 715,460 720,475 727,482 725,495 712,504 704,498 705,485 700,478 700,466 705,460",
  "757,417 764,416 766,425 762,436 752,441 749,434 757,417",
  "932,40 926,44 921,45 918,85 910,88 905,95 904,110 897,132 896,145 902,153 915,150 930,158 950,152 952,145 944,132 950,96 935,92 930,86 920,85",
  "932,40 950,50 963,42 975,50 990,72",
  "930,158 927,170 930,235 945,260 952,285 975,330 980,335 990,333",
  "992,388 985,405 965,430 962,455 955,490 948,500 942,518 934,530 930,546 915,545 905,552 905,560 918,570 914,580 905,586 907,598 918,604 905,612 920,622 903,628 908,636 916,642 908,650 910,660",
  "992,445 978,475 978,490 985,520 980,560 978,590 990,630",
];

const east = [
  "0,45 28,72 45,73 50,69 75,68 100,90 120,104 135,120 145,130 148,150 165,165 180,178 195,198 210,220 225,242 235,250 238,262 252,266 262,276 266,290 280,292 283,308 292,315 294,330 310,330 320,335 326,327 332,335 332,350 342,348 350,348 354,334 362,337 366,350 382,348 384,358 378,370 390,380 402,392 405,405 415,415 422,430 432,425 445,427 450,412 456,404 465,412 480,411 490,420 484,430 478,424 470,430 455,426 445,438 436,445 434,465 440,472 452,478 458,472 475,480 482,486 490,480 498,487 515,480 525,482 530,474 535,480 543,460 549,476 556,462 562,480 568,445 574,447 575,475 590,507 600,508 602,495 597,475 597,455 607,445 620,448 625,465 627,483 640,495 682,498 690,485 702,478 712,456 710,433 690,428 680,418 665,415 655,420 648,405 643,390 642,365 635,352 625,346 612,347 610,330 605,326",
  "140,34 136,60 142,75 148,112 165,120 180,128 190,142 205,148 215,160 235,180 250,195 265,225 280,240 295,265 310,285 325,303 345,315 358,318 380,317 395,318 403,312 412,317 420,320 432,314 442,317 450,319 460,315 482,315 500,306 510,312 512,325 522,328 530,322 542,326 545,334 537,345 540,360 545,367 552,363 556,350 550,345 560,338 570,328 580,322 592,321",
  "193,34 195,50 190,58 205,72 218,80 224,88 222,97 238,106 248,122 262,127 275,138 292,138 298,145 298,158 312,162 318,180 325,190 330,215 340,228 350,237 362,228 375,232 400,235 412,245 425,260 440,258 450,270 465,272 475,284 478,265 470,248 461,238 466,230 476,230 480,215 488,205 495,210 500,232 512,247 530,250 545,258 575,263 582,260 580,275 590,290 596,302 600,285 615,279 625,286 640,285 643,325 648,333 668,332 680,338 684,362 672,372 672,382 685,388 684,402 700,402 718,410 727,403 728,415 720,422 722,432 731,436 728,450 718,458 722,475 712,482 700,487 695,507 745,514 758,525 763,545 764,570 780,580 790,578 798,592 800,605 790,618 776,624 776,636 840,638 850,642 885,645 900,650 905,660",
  "558,34 568,50 580,57 600,58 605,68 614,75 607,95 610,112 618,128 625,137",
  "610,34 622,48 640,50 650,60 662,58 668,82 685,93 688,120 692,150 712,165 715,182 722,195 733,196 745,215 755,215 765,228 768,240 782,245 784,255 795,262 805,285 815,292 822,312 832,325 845,345 852,348 852,362 865,375 880,388 900,390 912,405 925,415 940,418",
  "648,98 660,103 667,105 665,118 661,125 663,145 668,160 663,182 656,188 660,205 656,235 645,235 635,226 622,220 617,208 622,195 617,178 621,160 620,145 627,132 637,128 634,118 637,100 648,98",
  "663,187 690,195 705,205 722,220 732,250 738,275 755,295 765,305 780,325 790,345 805,355 815,370 835,382 840,395 835,405 852,412 858,420 856,432 870,440 882,455 895,464 908,458 925,465 940,467",
  "735,34 750,48 756,60 757,100 749,120 750,145 762,153 771,145 772,115 770,60 760,34",
  "813,34 835,60 860,78 885,95 895,125 892,160 880,185 890,205 890,225 908,236 907,255 901,270 912,290 920,300 938,326",
  "843,34 850,50 880,65 905,80 922,98 927,115 928,160 938,192",
  "104,150 118,150 122,165 130,180 142,195 152,200 156,225 170,245 190,265 210,290 232,306 252,318 250,338 258,348 280,362 300,380 322,398 330,418 333,437 345,446 370,455 400,472 432,486 460,495 490,512 505,508 540,510 548,518 552,535 575,550 590,575 605,590 622,605 640,622 672,625 690,645 705,660",
  "104,150 108,174 122,188 118,200 122,225 132,242 152,253 152,270 175,288 200,305 220,322 238,335 238,350 252,362 270,390 290,418 305,442 322,465 335,485 365,518 390,560 410,580 430,603 428,615 438,625 438,635 450,640 467,660",
  "0,295 12,325 20,332 32,333 42,315 45,298 55,290 60,310 66,325 65,375 58,405 50,430 42,455 38,485 32,495 28,520 38,532 36,548 32,560 35,582 50,600 53,615 50,660",
  "42,660 38,645 25,625 18,610 22,595 28,582 25,540 15,520 15,490 25,470 28,440 45,395 53,375 53,345 48,343 42,355 40,380 25,405 5,430 0,450",
  "38,540 52,533 70,535 85,546 115,546 115,553 90,555 82,565 75,602 53,612",
];

const south = [
  "735,0 742,12 752,18 755,28 775,38 780,50 778,62 790,70 792,82 808,98 820,108 825,120 840,133 850,135 872,158 880,175 890,180 890,210 900,220 902,235 912,245 916,270 905,282 905,300 890,318 878,325 895,336 938,340 952,347 962,338 978,334 1000,335 1040,360 1055,380 1070,392 1082,415 1097,432 1102,422 1110,422 1120,438 1132,452 1162,448 1175,440 1192,438 1205,448 1226,452 1232,482",
  "975,0 990,20 1010,38 1040,55 1055,55 1075,62 1085,85 1100,105 1125,112 1148,115 1158,130 1155,150 1175,160 1190,160 1202,170 1222,168 1225,180 1208,190 1218,200 1235,202",
  "1075,0 1090,8 1185,14 1200,25 1210,45 1218,60 1235,73",
  "65,0 72,30 70,55 90,85 110,120 118,145 128,165 140,190 145,220 150,240 157,270 170,285 185,292 187,325 195,345 235,357 270,372 285,395 288,436",
  "155,0 145,25 152,55 160,80 165,105 172,112 190,102 193,108 183,147 195,165 210,182 233,225 235,237 220,225 195,210 182,198 170,200 170,220 175,242 186,255 186,232 200,230 220,240 233,238 250,251 262,240 264,200 258,185 245,150 240,125 237,105 240,60 252,10 250,0",
  "188,255 188,275 200,288 207,305 215,322 230,335 235,350 245,352 258,365 235,357",
  "330,0 335,15 348,30 348,62 342,68 352,75 365,72 364,85 350,92 360,105 370,110 366,125 355,125 360,145 352,158 360,165 353,180 362,190 370,214 405,222 408,232 400,250 385,262 370,272 358,285 355,300 335,312 320,320 300,335 290,352 292,385 315,410 350,434",
  "354,0 350,62",
  "28,200 32,215 26,240 40,246 55,240 70,240 76,250 78,276 95,268 108,275 115,266 130,281 145,272 158,272",
  "28,313 45,325 55,340 75,355 70,365 50,370 50,382 62,390 130,388 130,405 134,434",
  "394,120 410,135 430,143 485,156 505,150 520,140 530,150 540,162 550,168 562,160 565,175 555,190 555,210 550,222 548,250 520,232 495,220 470,217 455,205 432,212 435,195 400,178 394,165 400,150 394,120",
  "537,152 515,160 512,172 497,185 490,205 470,215",
  "545,165 530,190 515,195 512,212 495,220",
  "285,270 292,262 300,254 330,257 330,270 318,278 320,300 308,305 300,300 288,292 283,280 285,270",
  "370,268 376,285 372,305 350,320 348,342 360,355 380,375",
  "420,286 440,292 470,295 490,305 503,320 505,332 530,328 575,326 590,330 612,340 617,325 615,300 600,285 580,292 550,308 525,318 503,320",
  "420,286 412,292 400,300 404,322 395,338 382,345 380,375 395,385 410,395 418,415 430,426 440,420 440,390 455,382 470,387 485,365 500,360 515,352 515,364 500,372 480,390 465,402 465,412 475,420 480,434",
  "560,236 585,237 592,228 602,222 610,232 625,235 632,252 642,268 655,282 650,292 635,293 630,320 624,345 635,348 650,343 668,355 680,345 695,350 705,342 725,352 748,343 760,355 775,362 795,380 815,388 835,398 850,402 862,400 862,392 840,380 820,370 800,352 803,332 815,315 808,306 795,310 788,320 775,328 770,312 758,310 752,322 738,327 722,310 710,298 698,285 688,283 670,295 650,292",
  "560,236 562,246 580,250 610,249 625,262 625,275 618,280 603,280",
  "800,385 822,402 840,412 852,440 835,458 825,480 810,500 790,485 765,475 755,470 755,460 760,440 756,418 768,416 778,426 795,432 790,445 780,450 778,475",
  "638,480 638,450 650,443 690,443 685,430 697,417 708,425 720,432 740,432 757,440",
  "690,443 688,455 705,458 705,464 690,470 695,478 718,476 728,488 730,505 738,500 742,490 750,496 748,545 738,550 720,538 705,535 690,530 672,530 665,542 650,547 635,535",
  "690,530 700,548 722,562 732,580 742,582 745,598 752,608",
  "810,498 802,505 805,515 805,608",
  "850,440 870,455 880,475 895,485 905,502 925,512 930,530 925,545 935,560 938,575 947,585 938,598 935,608",
  "985,380 958,385 950,400 952,420 962,430 965,442 985,462 1005,462 1028,468 1028,500 1032,515 1045,535 1062,550 1062,588 1050,587 1042,572 1037,580 1038,608",
  "985,380 1008,378 1022,385 1030,400 1045,408 1055,425 1065,445 1088,454 1096,445 1096,428",
  "1068,608 1078,600 1088,602 1095,608",
  "1163,230 1170,234 1175,245 1172,262 1185,270 1188,300 1195,310 1197,325 1205,328 1212,345 1200,345 1183,338 1182,322 1175,312 1175,290 1167,282 1168,262 1163,245 1163,230",
  "1235,232 1205,230 1205,242 1213,250 1203,262 1212,275 1213,295 1225,303 1232,312 1236,300 1222,270 1227,250 1222,232",
  "1222,242 1235,290",
  "635,568 642,585 655,595 655,608",
];

function MapCanvas() {
  return (
    <div className="flex-1 border-t border-l border-[#a8a8a8] bg-white">
      <svg className="block h-[470px] w-[780px]" viewBox="240 164 780 470" fill="none">
        <path d="M873 315L878 320L873 325ZM786 201L788.500 199L791 201Z" fill="#1fb0ee" />
        <path d="M245.500 198.500L560 200L873.700 201.300L871.700 603.500L245.500 602.500Z" fill="#e3b436" stroke="#3a3a36" strokeWidth="1.2" />
        <g stroke="#3b351f" strokeWidth="3" strokeLinejoin="round">
          <g transform="translate(240 190) scale(.33333)">
            {west.map((s) => (
              <path key={s} d={soft(s)} />
            ))}
          </g>
          <g transform="translate(560 190) scale(.33333)">
            {east.map((s) => (
              <path key={s} d={soft(s)} />
            ))}
            <circle cx="599" cy="320" r="8" />
          </g>
          <g transform="translate(460 400) scale(.33333)">
            {south.map((s) => (
              <path key={s} d={soft(s)} />
            ))}
          </g>
        </g>
        <path d="M240 633.500H1020" stroke="#ececec" />
      </svg>
    </div>
  );
}

/* ---------- context menus ---------- */

function MIc({ k }: { k?: string }) {
  return (
    <svg className="h-[16px] w-[25px] shrink-0" viewBox="0 0 75 48" fill="none" strokeLinejoin="round">
      {(k === "zoom" || k === "zoomg") && (
        <g transform="translate(40 18) scale(.74)">
          <rect x="-26" y="-20" width="30" height="34" fill="#ddd" stroke="#aaa" strokeWidth="2.5" />
          <Glass x={6} y={0} gray={k === "zoomg"} />
        </g>
      )}
      {k === "glasses" && (
        <>
          <circle cx="26" cy="12" r="7" stroke="#222" strokeWidth="4" />
          <circle cx="49" cy="12" r="7" stroke="#222" strokeWidth="4" />
          <path d="M33 10H42M20 8L16 4M55 8L59 4" stroke="#222" strokeWidth="3.5" />
          <rect x="44" y="28" width="13" height="13" rx="3" fill="#fff" stroke="#4f9a5c" strokeWidth="5" />
        </>
      )}
      {k === "box" && <rect x="19" y="6" width="36" height="36" fill="#fff" stroke="#b4b4b4" strokeWidth="3" />}
      {k === "dup" && (
        <>
          <path d="M19 10C19 4 27 4 29 4H55V36H29L25 44H19Z" fill="#d6d6d6" stroke="#888" strokeWidth="3" />
          <rect x="28" y="5" width="27" height="31" fill="#ececec" stroke="#888" strokeWidth="3" />
          <rect x="43" y="28" width="13" height="13" fill="#f7e9a8" stroke="#d1ab22" strokeWidth="4" />
        </>
      )}
      {k === "rem" && (
        <>
          <rect x="20" y="6" width="31" height="31" fill="#f0f0f0" stroke="#888" strokeWidth="3" />
          <rect x="42" y="32" width="15" height="10" rx="4" fill="#fff" stroke="#e2494d" strokeWidth="4" />
        </>
      )}
      {k === "table" && (
        <>
          <rect x="19" y="7" width="36" height="35" fill="#dbe8f5" stroke="#8db0d8" strokeWidth="3" />
          <path d="M19 11H55" stroke="#8db0d8" strokeWidth="7" />
          <path d="M31 14V42M19 21H55M19 28H55M19 35H55" stroke="#8db0d8" strokeWidth="2.5" />
        </>
      )}
      {k === "pencil" && (
        <g transform="translate(21 2) scale(.7)">
          <Pencil x={0} y={0} />
        </g>
      )}
    </svg>
  );
}

type ItemProps = { t: string; icon?: string; sel?: boolean; off?: boolean; arrow?: boolean };

function Item({ t, icon, sel, off, arrow }: ItemProps) {
  const tone = sel ? "bg-[#0078d7] text-white" : off ? "text-[#7f7f7f]" : "text-[#0c0c0c]";
  return (
    <div className={`flex h-[21.5px] shrink-0 items-center ${tone}`}>
      <MIc k={icon} />
      <span className="flex-1 pt-px whitespace-nowrap">
        <Mn t={t} />
      </span>
      {arrow && (
        <svg className="mr-1 h-[8px] w-[5px]" viewBox="0 0 5 8">
          <path d="M0 0L5 4L0 8Z" fill={sel ? "#dfeaf5" : "#4a4a4a"} />
        </svg>
      )}
    </div>
  );
}

const Sep = () => (
  <div className="flex h-[2px] shrink-0 items-start pr-1 pl-1">
    <div className="h-px flex-1 bg-[#c6c6c6]" />
  </div>
);

function ContextMenu() {
  return (
    <div className="absolute top-[234px] left-[190px] h-[377px] w-[279px] border border-[#a3a3a3] bg-white">
      <div className="mt-[-0.6px] flex flex-col text-[10.5px]">
        <Item t="&Zoom a la capa" icon="zoom" />
        <Item t="&Zum a la selección" icon="zoomg" off />
        <Item t="Mo&strar en la vista general" icon="glasses" />
        <Item t="Mostrar número de objetos espaciales" icon="box" />
        <Item t="Copiar capa" />
        <Item t="Cambiar &nombre de la capa" />
        <Sep />
        <Item t="&Duplicar capa" icon="dup" />
        <Item t="&Remove Layer..." icon="rem" />
        <Sep />
        <Item t="Move Out of &Group" />
        <Sep />
        <Item t="&Abrir tabla de atributos" icon="table" />
        <Item t="Conmutar edición" icon="pencil" />
        <Item t="&Filter..." />
        <Sep />
        <Item t="&Set Layer Scale Visibility..." />
        <Item t="Establecer SRC" />
        <Sep />
        <Item t="Exportar" sel arrow />
        <Sep />
        <Item t="Estilos" arrow />
        <Item t="&Properties..." />
      </div>
    </div>
  );
}

function SubMenu() {
  return (
    <div className="absolute top-[544px] left-[468px] flex h-[87px] w-[203px] flex-col border border-[#a3a3a3] bg-white text-[10.5px]">
      <Item t="Save Features As..." sel />
      <Item t="Save Selected Features As..." off />
      <Item t="Save as Layer Definition File..." />
      <Item t="Save as QGIS Layer Style File..." />
    </div>
  );
}

/* ---------- step callouts ---------- */

function Callouts() {
  const num = "absolute font-['Inter',sans-serif] text-[34px] leading-[36px] font-black text-[#fb0407] [-webkit-text-stroke:1.2px_#fb0407]";
  return (
    <>
      <span className={`${num} top-[201px] left-[7px]`}>1</span>
      <span className={`${num} top-[509px] left-[169px]`}>2</span>
      <span className={`${num} top-[510px] left-[441px]`}>3</span>
      <svg className="pointer-events-none absolute top-0 left-0 h-[634px] w-[1020px]" viewBox="0 0 1020 634" stroke="#e8101a" strokeWidth="1.6" fill="#e8101a">
        <path d="M0 237.600H39M164 554.700H200M435 553.500H473" />
        <path d="M39 234.200L45 237.600L39 241ZM199 551.300L205 554.700L199 558.100ZM473 550.100L479 553.500L473 556.900Z" stroke="none" />
      </svg>
    </>
  );
}

export default function App() {
  return (
    <div className="relative flex h-[634px] w-[1020px] overflow-hidden bg-white font-['Open_Sans','Noto_Sans',sans-serif]">
      <div className="w-[33px] shrink-0" />
      <div className="flex w-[987px] flex-col bg-[#f0f0f0]">
        <nav className="flex h-4 shrink-0 items-center pl-[9px] text-[10px] whitespace-nowrap text-[#0c0c0c]">
          <span className="w-[53px]"><Mn t="Pro&yecto" /></span>
          <span className="w-[44px]"><Mn t="&Edición" /></span>
          <span className="w-[28px]"><Mn t="&Ver" /></span>
          <span className="w-[37px] tracking-[0.1px]"><Mn t="&Capa" /></span>
          <span className="w-[75px] tracking-[-0.2px]"><Mn t="Confi&guración" /></span>
          <span className="w-[78px] tracking-[-0.4px]"><Mn t="Co&mplementos" /></span>
          <span className="w-[52px] tracking-[-0.1px]"><Mn t="Vect&orial" /></span>
          <span className="w-[43px]"><Mn t="&Ráster" /></span>
          <span className="w-[34px]"><Mn t="&Web" /></span>
          <span className="w-[53px] tracking-[-0.1px]"><Mn t="Pro&cesos" /></span>
          <span><Mn t="A&yuda" /></span>
        </nav>
        <FileBar />
        <EditBar />
        <DigitizeBar />
        <SnapBar />
        <div className="flex min-h-0 flex-1 pt-px">
          <LayersPanel />
          <MapCanvas />
        </div>
      </div>
      <ContextMenu />
      <SubMenu />
      <Callouts />
    </div>
  );
}
